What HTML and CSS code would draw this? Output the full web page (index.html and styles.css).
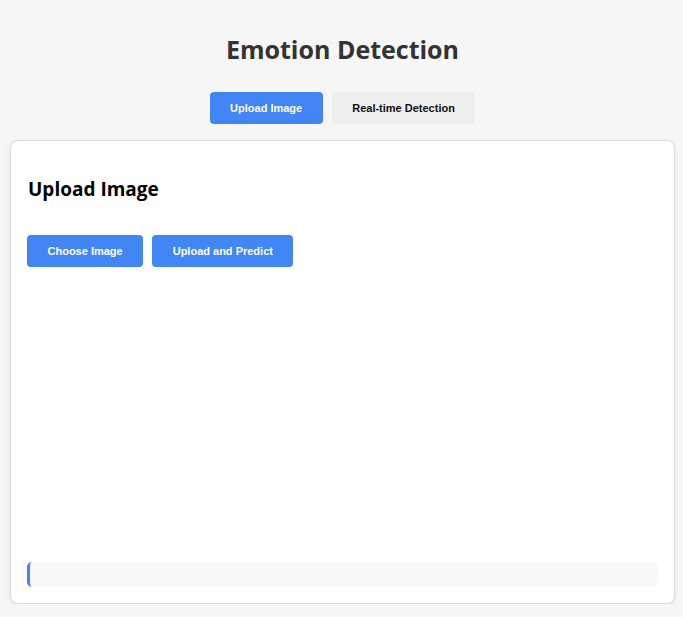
FILE: index.html
```html
<!DOCTYPE html>
<html lang="en">
<head>
<meta charset="utf-8">
<title>Emotion Detection</title>
<link rel="stylesheet" href="styles.css">
</head>
<body>
  <h1 class="title">Emotion Detection</h1>
  <div class="tabs">
    <button class="btn btn-primary">Upload Image</button>
    <button class="btn btn-tab">Real-time Detection</button>
  </div>
  <div class="card">
    <h2 class="card-title">Upload Image</h2>
    <div class="actions">
      <button class="btn btn-primary">Choose Image</button>
      <button class="btn btn-primary">Upload and Predict</button>
    </div>
    <div class="preview"></div>
    <div class="result"></div>
  </div>
</body>
</html>
```

FILE: styles.css
```css
html, body {
  margin: 0;
  padding: 0;
}
body {
  background: #f6f6f6;
  font-family: "Open Sans", "Noto Sans", sans-serif;
  color: #333;
  padding: 0 8px 0 10px;
}
.title {
  margin: 0;
  padding-top: 32px;
  font-size: 25px;
  line-height: 34px;
  font-weight: 700;
  text-align: center;
  color: #333;
}
.tabs {
  display: flex;
  justify-content: center;
  gap: 9px;
  margin-top: 26px;
}
.btn {
  height: 32px;
  padding: 0 20.5px;
  border: none;
  border-radius: 4px;
  font-family: "Liberation Sans", Arial, sans-serif;
  font-weight: 700;
  font-size: 11px;
}
.btn-primary {
  background: #4285f4;
  color: #fff;
}
.btn-tab {
  background: #eeeeee;
  color: #111;
}
.card {
  margin-top: 16px;
  background: #fff;
  border: 1px solid #dcdcdc;
  border-radius: 8px;
  box-shadow: 0 2px 4px rgba(0,0,0,0.08);
  padding: 16px;
}
.card-title {
  margin: 20px 0 0 1px;
  font-size: 19px;
  line-height: 24px;
  font-weight: 700;
  color: #000;
}
.actions {
  display: flex;
  gap: 9px;
  margin-top: 34px;
}
.preview {
  height: 295px;
}
.result {
  height: 25px;
  background: #f8f8f8;
  border-left: 3px solid #4285f4;
  border-radius: 5px;
}
```
